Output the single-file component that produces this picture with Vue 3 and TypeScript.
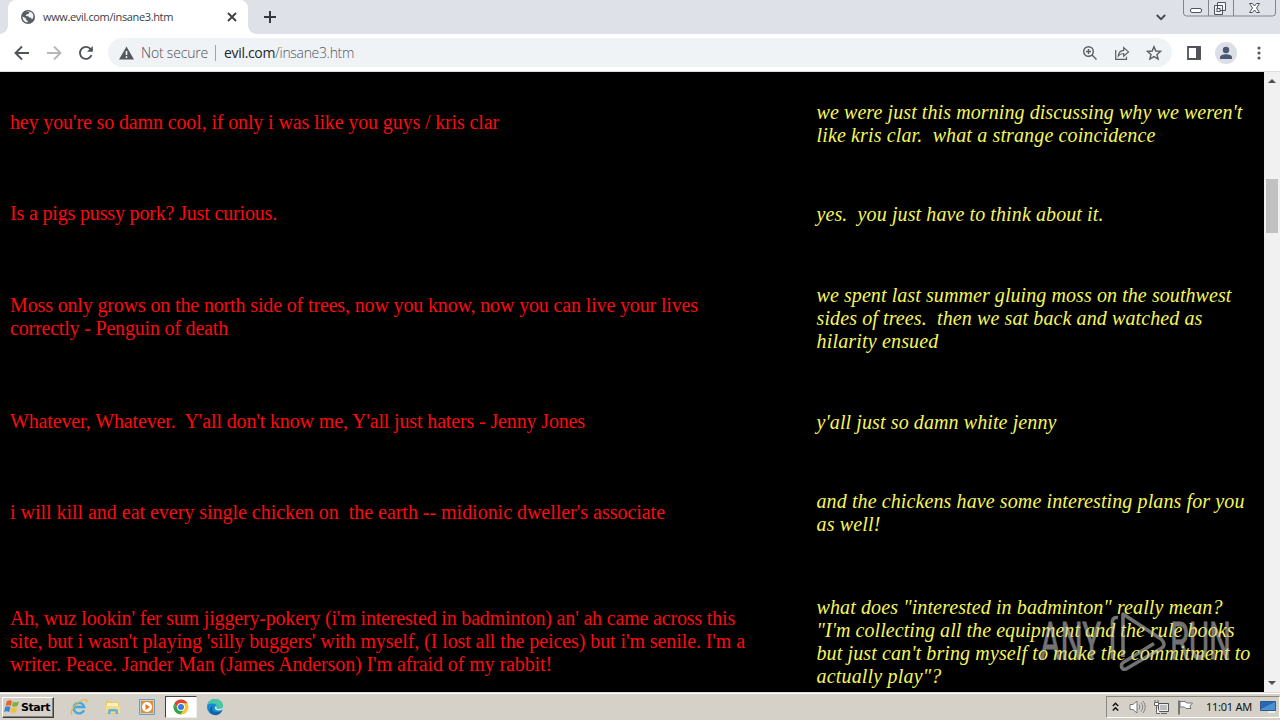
<script setup lang="ts">
import type { Directive } from 'vue'

interface Line { text: string; width: number }
interface Row { height: number; quote: Line[]; reply: Line[] }

const l = (text: string, width: number): Line => ({ text, width })

const rows: Row[] = [
  { height: 103,
    quote: [l("hey you're so damn cool, if only i was like you guys / kris clar", 489)],
    reply: [l("we were just this morning discussing why we weren't", 426), l('like kris clar.  what a strange coincidence', 339)] },
  { height: 79,
    quote: [l('Is a pigs pussy pork? Just curious.', 267)],
    reply: [l('yes.  you just have to think about it.', 287)] },
  { height: 128,
    quote: [l('Moss only grows on the north side of trees, now you know, now you can live your lives', 688), l('correctly - Penguin of death', 218)],
    reply: [l('we spent last summer gluing moss on the southwest', 415), l('sides of trees.  then we sat back and watched as', 386), l('hilarity ensued', 122)] },
  { height: 80,
    quote: [l("Whatever, Whatever.  Y'all don't know me, Y'all just haters - Jenny Jones", 575)],
    reply: [l("y'all just so damn white jenny", 240)] },
  { height: 102,
    quote: [l("i will kill and eat every single chicken on  the earth -- midionic dweller's associate", 655)],
    reply: [l('and the chickens have some interesting plans for you', 428), l('as well!', 64)] },
  { height: 156,
    quote: [l("Ah, wuz lookin' fer sum jiggery-pokery (i'm interested in badminton) an' ah came across this", 725), l("site, but i wasn't playing 'silly buggers' with myself, (I lost all the peices) but i'm senile. I'm a", 735), l("writer. Peace. Jander Man (James Anderson) I'm afraid of my rabbit!", 542)],
    reply: [l('what does "interested in badminton" really mean?', 406), l('"I\'m collecting all the equipment and the rule books', 418), l("but just can't bring myself to make the commitment to", 434), l('actually play"?', 125)] },
]

/* Spreads the letters so that a line takes up exactly the given width. */
const vFit: Directive<HTMLElement, number> = {
  mounted(el, binding) {
    const count = el.textContent?.length ?? 1
    const gap = (binding.value - el.getBoundingClientRect().width) / count
    el.style.letterSpacing = `${gap.toFixed(4)}px`
  },
}
</script>

<template>
  <div class="screen">
    <header class="tabstrip">
      <div class="tab">
        <svg class="globe" width="14" height="14" viewBox="0 0 14 14"><circle cx="7" cy="7" r="7" fill="#5a5e62" /><path d="M1.500 6.500 4.500 8l1 2.200 1.200.7v1.600C3.700 12.300 1.500 10 1.500 6.500ZM5 1.900l2.600-.5.9 1.100-1.300 1.600-1.800.5L4.600 6l2.600.2 1.500 1.500h1.500l.5 1.600 1-.5c1.700-3 .2-6.200-2.500-7" fill="#f4f4f4" /></svg>
        <span v-fit="130" class="tab-title">www.evil.com/insane3.htm</span>
        <svg class="tab-close" width="10" height="10" viewBox="0 0 10 10"><path d="m1 1 8 8M9 1 1 9" stroke="#3c4043" stroke-width="1.800" /></svg>
      </div>
      <svg class="plus" width="12" height="12" viewBox="0 0 12 12"><path d="M6 0v12M0 6h12" stroke="#35383c" stroke-width="2" /></svg>
      <svg class="chevron" width="10" height="7" viewBox="0 0 10 7"><path d="m.8 1 4.200 4.200L9.200 1" fill="none" stroke="#45484c" stroke-width="1.800" /></svg>
      <div class="controls">
        <svg width="93" height="17" viewBox="0 0 93 17" fill="none">
          <path d="M.5 0v13q0 3 3 3h86q3 0 3-3V0M25.500 0v16M50.500 0v16" stroke="#80858f" />
          <rect x="7.500" y="8.500" width="11" height="4" rx="1.500" fill="#fff" stroke="#50545e" />
          <path d="M34.500 2.500h8v8h-8zM31.500 5.500h8v9h-8z" fill="#f4f5f7" stroke="#50545e" /><rect x="34" y="8.500" width="3" height="3" fill="#fff" stroke="#50545e" />
          <path d="M66.500 3.500h3l2 2.500 2-2.500h3l-3 4.500 3 4.500h-3l-2-2.500-2 2.500h-3l3-4.500z" fill="#fff" stroke="#50545e" />
        </svg>
      </div>
    </header>

    <nav class="toolbar">
      <svg class="nav-icon back" width="16" height="16" viewBox="0 0 16 16"><path d="M15 8H2M8 1.500 1.500 8 8 14.500" /></svg>
      <svg class="nav-icon forward" width="16" height="16" viewBox="0 0 16 16"><path d="M1 8h13M8 1.500 14.500 8 8 14.500" /></svg>
      <svg class="nav-icon reload" width="16" height="16" viewBox="0 0 16 16"><path d="M13.500 10.200A6 6 0 1 1 12.700 4.200L14 5.500" /><path d="M14.800 1v5.800H9z" class="solid" /></svg>
      <div class="omnibox">
        <svg class="warn" width="15" height="14" viewBox="0 0 15 14"><path d="M7.500.5 15 13.500H0z" fill="#55595d" /><path d="M7.500 5v4M7.500 10.300V12" stroke="#fff" stroke-width="1.500" /></svg>
        <span v-fit="67" class="insecure">Not secure</span>
        <i class="divider"></i>
        <span v-fit="130" class="url"><b>evil.com</b>/insane3.htm</span>
        <div class="omni-icons">
          <svg width="16" height="16" viewBox="0 0 16 16"><circle cx="6.500" cy="6.500" r="4.800" /><path d="m10 10 4.500 4.500M4 6.500h5M6.500 4v5" /></svg>
          <svg width="16" height="16" viewBox="0 0 16 16"><path d="M1.700 5v9.300h10.800v-2.500M4.300 11c.3-3.600 2-5.300 5.400-5.600V2.500l4.800 4.400-4.800 4.300V8.500c-2.400 0-4 .7-5.400 2.500Z" class="thin" /></svg>
          <svg width="16" height="16" viewBox="0 0 16 16"><path d="m8 1.700 1.800 4.300 4.700.4L11 9.500l1.100 4.600L8 11.600l-4.100 2.500L5 9.500 1.500 6.400 6.200 6z" /></svg>
        </div>
      </div>
      <svg class="panel" width="14" height="14" viewBox="0 0 14 14"><path d="M1 1h12v12H1z" fill="#fff" stroke="#50545a" stroke-width="1.800" /><path d="M9 1h5v12H9z" fill="#50545a" /></svg>
      <svg class="avatar" width="22" height="22" viewBox="0 0 22 22"><circle cx="11" cy="11" r="11" fill="#dcdfe5" /><circle cx="11" cy="8" r="3.200" fill="#4b5874" /><path d="M5 17v-1.500c0-2 3-3.200 6-3.200s6 1.200 6 3.200V17z" fill="#4b5874" /></svg>
      <svg class="dots" width="4" height="14" viewBox="0 0 4 14" fill="#55585c"><circle cx="2" cy="2" r="1.600" /><circle cx="2" cy="7" r="1.600" /><circle cx="2" cy="12" r="1.600" /></svg>
    </nav>

    <main class="viewport">
      <div class="page">
        <div v-for="(row, i) in rows" :key="i" class="row" :style="{ height: row.height + 'px' }">
          <div class="cell quote"><div v-for="line in row.quote" :key="line.text" class="line"><span v-fit="line.width">{{ line.text }}</span></div></div>
          <div class="cell reply"><div v-for="line in row.reply" :key="line.text" class="line"><span v-fit="line.width">{{ line.text }}</span></div></div>
        </div>
      </div>
      <div class="scrollbar">
        <svg width="8" height="4" viewBox="0 0 8 4"><path d="M0 4 4 0l4 4z" fill="#505050" /></svg>
        <i class="thumb"></i>
        <svg class="down" width="8" height="4" viewBox="0 0 8 4"><path d="m0 0 4 4 4-4z" fill="#505050" /></svg>
      </div>
      <svg class="watermark" width="200" height="70" viewBox="0 0 200 70">
        <g fill="#c4c4c4" stroke="#c4c4c4" stroke-width=".8" font-family="Roboto, sans-serif" font-size="51">
          <text x="5" y="54" textLength="61" lengthAdjust="spacingAndGlyphs">ANY</text>
          <text x="135" y="54" textLength="61" lengthAdjust="spacingAndGlyphs">RUN</text>
        </g>
        <path d="M83 12.500q-5.500-.5-5.500 4V54M88 52V9l38 25q6 5.500 0 9.500L91 64q-4 1-4.500-2.500-.5-3 2.500-4.500l30-18.500" fill="none" stroke="#c4c4c4" stroke-width="3.600" stroke-linejoin="round" />
      </svg>
    </main>

    <footer class="taskbar">
      <div class="start">
        <svg width="16" height="16" viewBox="0 0 16 16"><path d="M3 2q3-1.500 5 .2L6.800 7Q4 5.500 1.500 7z" fill="#e8632c" /><path d="M9 2.700q3 1.300 6-.2L13.500 7q-3 1.500-5.500.3z" fill="#7cb13a" /><path d="M1.200 8q3-1.400 5.300.2L5.200 13Q2.500 11.600 0 13z" fill="#3f84c8" /><path d="M7.600 8.500q3 1.200 5.600-.2L12 13q-3 1.400-5.600.2z" fill="#f3bf35" /></svg>
        <b v-fit="29">Start</b>
      </div>
      <svg class="task ie" width="18" height="18" viewBox="0 0 18 18" fill="none"><path d="M14 12.200A5.300 5.300 0 1 1 14.300 9H4.500" stroke="#45a9dd" stroke-width="2.300" /><path d="M2 16.500C-1 13 7 4 13 2q5-1.500 3.500 2.500" stroke="#dfba4d" stroke-width="1.300" /></svg>
      <svg class="task folder" width="18" height="18" viewBox="0 0 18 18"><path d="M2 3h5l1 1h7v12H2z" fill="#e8ca6e" /><path d="M3 5h11v3H3z" fill="#fbf0bd" /><path d="M2 8h14v7H2z" fill="#f4dc88" /><path d="M4 16v-3q0-2 2-2h6q2 0 2 2v3h-2.500v-2.500h-5V16z" fill="#62b3dc" /></svg>
      <svg class="task media" width="18" height="18" viewBox="0 0 18 18"><path d="M1.500 1.500h15v15h-15z" fill="#b8d5e8" stroke="#6c9cc4" /><path d="M3 3h12v12H3z" fill="#ef8a22" /><circle cx="9" cy="9" r="5" fill="#fff" /><path d="m7.500 6 4.500 3-4.500 3z" fill="#e87817" /></svg>
      <div class="active-task">
        <svg width="16" height="16" viewBox="0 0 16 16"><circle cx="8" cy="8" r="7.500" fill="#f7c72c" /><path d="M1.500 4.200A7.500 7.500 0 0 1 14.500 4.300H8L5 9.500z" fill="#df4335" /><path d="M1.500 4.200A7.500 7.500 0 0 0 7.500 15.500L11 10 5 10z" fill="#37a451" /><circle cx="8" cy="8" r="3.900" fill="#fff" /><circle cx="8" cy="8" r="3" fill="#397be0" /></svg>
      </div>
      <svg class="task edge" width="18" height="18" viewBox="0 0 18 18"><circle cx="9" cy="9" r="8" fill="#168bd2" /><path d="M1.500 6.500C4-1 15-.5 17 7c.7 4-4 5-6 3.500 1-4-3-6.500-9.500-4" fill="#48c9a1" /><path d="M7 8q-3 6 4 6 3 0 5-1-3 5-8 4-6-2-4-7z" fill="#1262a7" /><path d="M9 8.500q-1 3.500 3 4 2.500.3 5-1.500v-2q-1 2.500-5 2-2-.5-1-2.500" fill="#dce7e8" /></svg>
      <div class="tray">
        <svg class="collapse" width="7" height="10" viewBox="0 0 7 10"><path d="m.8 4 2.700-2.700L6.200 4M.8 8.500l2.700-2.700 2.700 2.700" fill="none" stroke="#111" stroke-width="1.500" /></svg>
        <svg class="sound" width="17" height="16" viewBox="0 0 17 16" fill="none"><path d="M1 5.500h3L8 2v12l-4-3.500H1z" fill="#fff" stroke="#777" /><path d="M10 5.500q2 2.500 0 5M12 3.500q3.500 4.500 0 9M14 2q4.500 6 0 12" stroke="#858585" /></svg>
        <svg class="network" width="17" height="16" viewBox="0 0 17 16"><path d="M5.500 4.500h10v8h-10z" fill="#bbb" stroke="#555" /><path d="M6.500 5.500h8v6h-8z" fill="none" stroke="#eee" /><path d="M1.500 3.500h4v3h-4zM2 1v2M5 1v2M3.500 7v7.500H7M8 14.500h6" fill="#fff" stroke="#666" /></svg>
        <svg class="flag" width="17" height="16" viewBox="0 0 17 16"><path d="M2 1.500v14" stroke="#777" stroke-width="2" /><path d="M3 2.500h5l2 1.500h5.500L13 7l1 2.500H9L7.500 8H3z" fill="#fff" stroke="#777" /></svg>
        <span v-fit="46" class="clock">11:01 AM</span>
        <svg class="desktop" width="16" height="14" viewBox="0 0 16 14"><path d="M.5 1.500h15v9H.5z" fill="#2668b6" stroke="#355985" /><path d="M1 9 15 2v8H1z" fill="#4b91d1" /><path d="M8 12h7" stroke="#eee" stroke-width="2" /></svg>
      </div>
    </footer>
  </div>
</template>

<style>
body { margin: 0; overflow: hidden; }
</style>

<style scoped>
.screen { width: 1280px; height: 720px; display: flex; flex-direction: column; overflow: hidden; font-family: "Open Sans", "Noto Sans", sans-serif; background: #fff; }
svg { display: block; flex: none; }
span { white-space: pre; }
.tabstrip { height: 34px; flex: none; display: flex; background: #dee1e8; align-items: flex-start; }
.tab { position: relative; box-sizing: border-box; width: 240px; height: 34px; margin-left: 8px; padding: 0 11px 0 13px; display: flex; align-items: center; background: #fff; border-radius: 8px 8px 0 0; }
.tab::before, .tab::after { content: ""; position: absolute; bottom: 0; width: 8px; height: 8px; }
.tab::before { left: -8px; background: radial-gradient(circle at 0 0, transparent 7.500px, #fff 8px); }
.tab::after { right: -8px; background: radial-gradient(circle at 100% 0, transparent 7.500px, #fff 8px); }
.tab-title { margin-left: 8px; margin-top: -1px; font-size: 11px; color: #3c4043; }
.tab-close { margin-left: auto; }
.plus { margin: 11px 0 0 16px; }
.chevron { margin: 14px 17px 0 auto; }
.controls { width: 93px; margin-right: 4px; }
.toolbar { height: 37px; flex: none; display: flex; align-items: center; border-bottom: 1px solid #dcdde0; background: #fff; }
.nav-icon { fill: none; stroke: #505458; stroke-width: 1.900; }
.nav-icon.back { margin-left: 14px; }
.nav-icon.forward { margin-left: 16px; stroke: #b5b7ba; }
.nav-icon.reload { margin-left: 16px; }
.nav-icon .solid { fill: #505458; stroke: none; }
.omnibox { width: 1064px; height: 29px; margin-left: 14px; display: flex; align-items: center; border-radius: 15px; background: #f0f3f6; box-sizing: border-box; padding-left: 11px; }
.insecure { margin-left: 7px; font-size: 14px; font-weight: 300; color: #4c5055; }
.divider { width: 1px; height: 16px; margin-left: 7px; background: #a1a5a9; }
.url { margin-left: 8px; font-size: 14px; font-weight: 300; color: #53575c; }
.url b { font-weight: 400; color: #24272b; }
.omni-icons { display: flex; gap: 16px; margin-left: auto; margin-right: 10px; }
.omni-icons svg { fill: none; stroke: #5a5e62; stroke-width: 1.400; }
.omni-icons .thin { stroke-width: 1.200; }
.panel { margin-left: 15px; }
.avatar { margin-left: 14px; }
.dots { margin-left: 20px; }
.viewport { position: relative; height: 620px; flex: none; display: flex; background: #000; overflow: hidden; }
.page { width: 1264px; height: 620px; overflow: hidden; font: 20px/23px "Liberation Serif", "Times New Roman", serif; }
.row { display: flex; align-items: center; }
.cell.quote { width: 806px; padding: 0 0 2px 10px; box-sizing: border-box; color: #fb0a10; }
.cell.reply { width: 458px; padding-left: 10.500px; box-sizing: border-box; font-style: italic; color: #f6f65c; }
.line { height: 23px; white-space: pre; }
.scrollbar { width: 16px; height: 620px; display: flex; flex-direction: column; align-items: center; background: #f1f1f1; box-sizing: border-box; padding: 7px 0; }
.thumb { width: 12px; height: 54px; margin-top: 96px; background: #c1c1c1; }
.down { margin-top: auto; }
.watermark { position: absolute; left: 1035px; top: 533px; opacity: .58; }
.taskbar { height: 28px; flex: none; box-sizing: border-box; display: flex; align-items: center; background: #d5d1c9; border-top: 1px solid #dedbd3; box-shadow: inset 0 1px #fff; padding-top: 1px; font-family: "DejaVu Sans", sans-serif; }
.start { width: 52px; height: 21px; margin-left: 2px; box-sizing: border-box; display: flex; align-items: center; padding-left: 1px; border: 1px solid; border-color: #fff #404040 #404040 #fff; box-shadow: inset -1px -1px #85827c; }
.start b { font: bold 11px "DejaVu Sans", sans-serif; color: #000; margin-left: 1px; white-space: pre; }
.ie { margin-left: 16px; }
.folder { margin-left: 16px; }
.media { margin-left: 16px; }
.active-task { width: 32px; height: 22px; margin-left: 9px; box-sizing: border-box; display: flex; align-items: center; justify-content: center; background: #fff; border: 1px solid; border-color: #404040 #eee #eee #404040; }
.edge { margin-left: 9px; }
.tray { width: 174px; height: 22px; margin-left: auto; margin-right: 0; box-sizing: border-box; display: flex; align-items: center; border: 1px solid; border-color: #8b8882 #fff #fff #8b8882; }
.collapse { margin-left: 5px; }
.sound { margin-left: 10px; }
.network { margin-left: 7px; }
.flag { margin-left: 7px; }
.clock { font-size: 11px; color: #111; margin-left: 12px; margin-top: -1px; font-family: "Noto Sans", sans-serif; }
.desktop { margin-left: 8px; }
</style>
